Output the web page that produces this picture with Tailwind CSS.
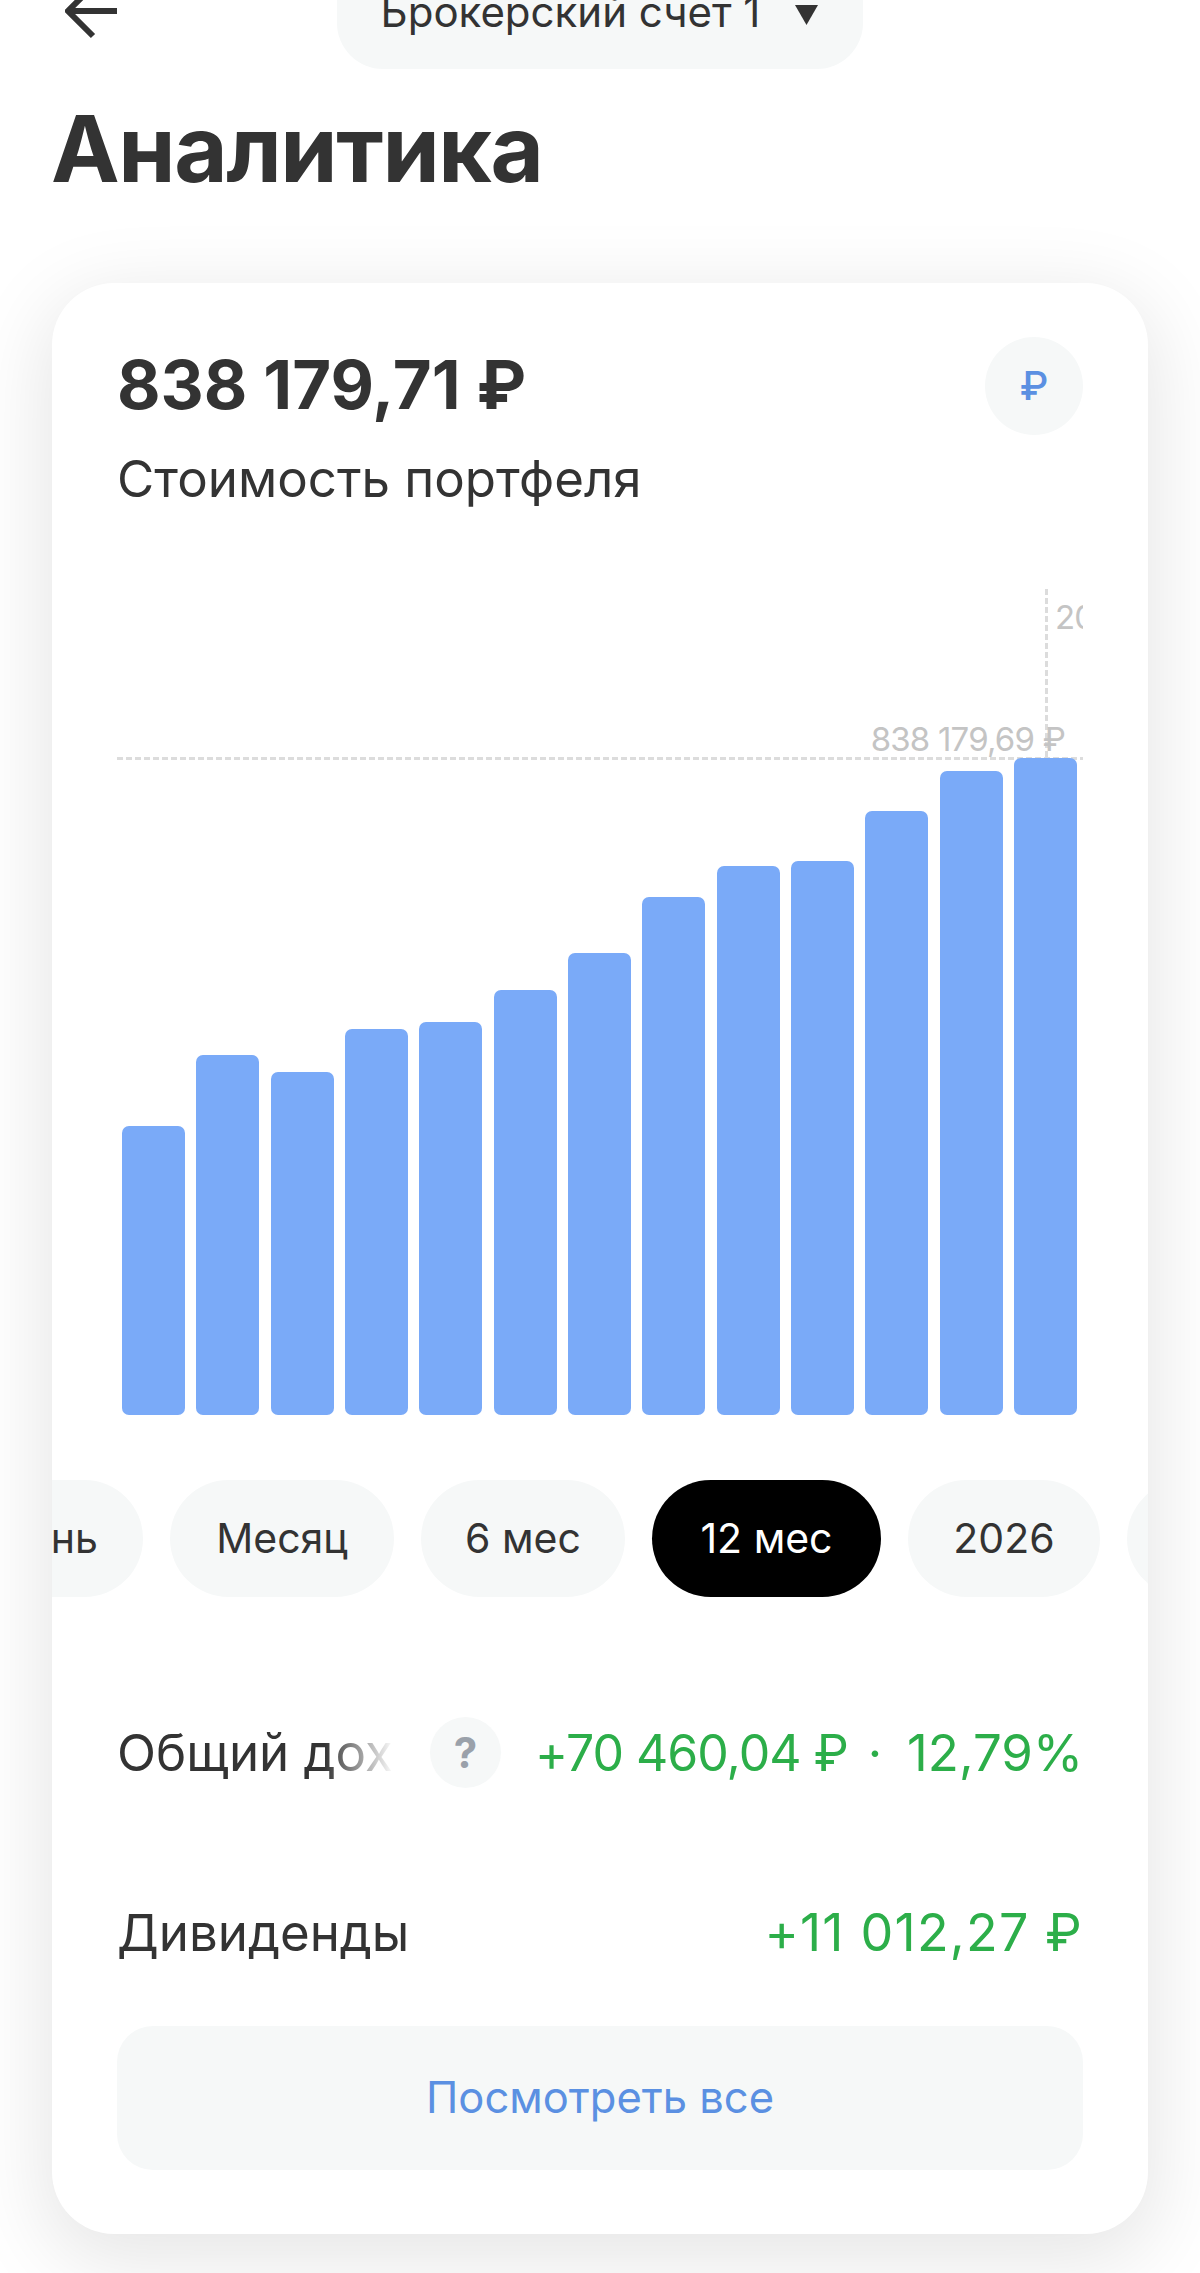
<!DOCTYPE html>
<html lang="ru">
  <head>
    <meta charset="UTF-8" />
    <title>Аналитика</title>
    <script src="https://cdn.jsdelivr.net/npm/@tailwindcss/browser@4"></script>
  </head>
  <body class="bg-white text-[#333333] font-['Inter',sans-serif]">
    <div class="w-[1200px] h-[2273px] overflow-hidden bg-white">
      <!-- top bar, cut off by the screen edge -->
      <header class="h-[69px] grid grid-cols-[1fr_auto_1fr] items-end px-[52px]">
        <svg class="ml-[13px] self-start" width="54" height="40" viewBox="0 0 54 40" fill="none" stroke="#333333" stroke-width="6">
          <path d="M52 11H3M28 -14L3 11L28 36" />
        </svg>
        <div class="h-[69px] w-[526px] rounded-b-[46px] bg-[#f6f8f8] flex items-end justify-center gap-[34px] pb-[35px]">
          <span class="text-[42px] leading-[44px] whitespace-nowrap">Брокерский счет 1</span>
          <svg class="mb-[9px]" width="25" height="20" viewBox="0 0 25 20" fill="#333333"><path d="M1 0H24L12.5 20Z" /></svg>
        </div>
        <div></div>
      </header>

      <h1 class="mt-[41px] px-[51px] text-[92px] leading-[78px] font-bold tracking-[-1.4px]">Аналитика</h1>

      <main class="relative mx-[52px] mt-[95px] h-[1951px] rounded-[62px] bg-white shadow-[0_20px_80px_8px_rgba(0,0,0,0.1)] overflow-hidden">
        <div class="flex justify-between px-[65px] pt-[54px]">
          <div>
            <div class="text-[67px] leading-[96px] font-bold">838 179,71 ₽</div>
            <div class="mt-[16px] text-[51px] leading-[60px]">Стоимость портфеля</div>
          </div>
          <div class="w-[98px] h-[98px] rounded-full bg-[#f6f8f8] flex items-center justify-center text-[40px] font-medium text-[#5b90e2]">₽</div>
        </div>

        <!-- chart -->
        <div class="relative mx-[65px] mt-[80px] h-[826px]">
          <div class="absolute left-0 right-0 top-[168px] h-[3px] bg-[repeating-linear-gradient(90deg,#dcdcdc_0_6px,transparent_6px_9px)]"></div>
          <div class="absolute left-[928px] top-0 w-[3px] h-[170px] bg-[repeating-linear-gradient(180deg,#dcdcdc_0_6px,transparent_6px_9px)]"></div>
          <div class="absolute right-0 top-[9px] w-[28px] overflow-hidden text-[33px] leading-[38px] tracking-[-0.8px] text-[#c4c4c4]">2026</div>
          <div class="absolute right-[18px] top-[131px] text-[33px] leading-[38px] tracking-[-0.8px] text-[#c4c4c4] whitespace-nowrap">838 179,69 ₽</div>
          <div class="absolute left-[5px] bottom-0 flex items-end gap-[11.35px]">
            <div class="w-[63px] h-[289px] rounded-[7px] bg-[#7aaaf8]"></div>
            <div class="w-[63px] h-[360px] rounded-[7px] bg-[#7aaaf8]"></div>
            <div class="w-[63px] h-[343px] rounded-[7px] bg-[#7aaaf8]"></div>
            <div class="w-[63px] h-[386px] rounded-[7px] bg-[#7aaaf8]"></div>
            <div class="w-[63px] h-[393px] rounded-[7px] bg-[#7aaaf8]"></div>
            <div class="w-[63px] h-[425px] rounded-[7px] bg-[#7aaaf8]"></div>
            <div class="w-[63px] h-[462px] rounded-[7px] bg-[#7aaaf8]"></div>
            <div class="w-[63px] h-[518px] rounded-[7px] bg-[#7aaaf8]"></div>
            <div class="w-[63px] h-[549px] rounded-[7px] bg-[#7aaaf8]"></div>
            <div class="w-[63px] h-[554px] rounded-[7px] bg-[#7aaaf8]"></div>
            <div class="w-[63px] h-[604px] rounded-[7px] bg-[#7aaaf8]"></div>
            <div class="w-[63px] h-[644px] rounded-[7px] bg-[#7aaaf8]"></div>
            <div class="w-[63px] h-[657px] rounded-[7px] bg-[#7aaaf8]"></div>
          </div>
        </div>

        <!-- period switcher, scrolled sideways -->
        <div class="mt-[65px] flex gap-[27px] text-[41px] whitespace-nowrap">
          <div class="shrink-0 w-[200px] -ml-[109px] h-[117px] rounded-full bg-[#f6f8f8] flex items-center justify-end pr-[45px]">День</div>
          <div class="shrink-0 w-[224px] h-[117px] rounded-full bg-[#f6f8f8] flex items-center justify-center">Месяц</div>
          <div class="shrink-0 w-[204px] h-[117px] rounded-full bg-[#f6f8f8] flex items-center justify-center">6 мес</div>
          <div class="shrink-0 w-[229px] h-[117px] rounded-full bg-black text-white flex items-center justify-center">12 мес</div>
          <div class="shrink-0 w-[192px] h-[117px] rounded-full bg-[#f6f8f8] flex items-center justify-center">2026</div>
          <div class="shrink-0 w-[192px] h-[117px] rounded-full bg-[#f6f8f8]"></div>
        </div>

        <div class="mt-[120px] mx-[65px] flex items-center h-[71px]">
          <div class="relative w-[277px] overflow-hidden whitespace-nowrap text-[51px] leading-[60px]">
            Общий доход
            <div class="absolute right-0 top-0 h-full w-[70px] bg-linear-to-r from-white/0 to-white"></div>
          </div>
          <div class="ml-[36px] w-[71px] h-[71px] rounded-full bg-[#f6f8f8] flex items-center justify-center text-[42px] font-bold text-[#9aa1aa]">?</div>
          <div class="ml-auto flex items-center text-[50px] leading-[60px] text-[#2cae49] whitespace-nowrap">
            <span class="tracking-[-1px]">+70 460,04 ₽</span>
            <span class="ml-[20px]">·</span>
            <span class="ml-[25px] text-[51px]">12,79%</span>
          </div>
        </div>

        <div class="mt-[115px] mx-[65px] flex justify-between text-[51px] leading-[60px]">
          <div>Дивиденды</div>
          <div class="text-[52px] tracking-[1.2px] text-[#2cae49]">+11 012,27 ₽</div>
        </div>

        <div class="mt-[63px] mx-[65px] h-[144px] rounded-[36px] bg-[#f6f8f8] flex items-center justify-center text-[43.5px] text-[#5b90e2]">Посмотреть все</div>
      </main>
    </div>
  </body>
</html>
